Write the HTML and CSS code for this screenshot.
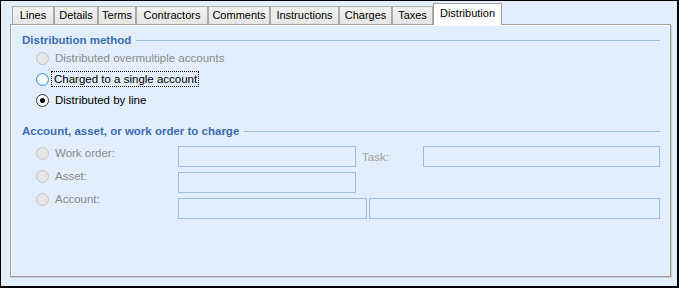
FILE: index.html
```html
<!DOCTYPE html>
<html>
<head>
<meta charset="utf-8">
<link rel="stylesheet" href="styles.css">
</head>
<body>
<div class="frame">
  <div class="tabs">
    <div class="tab w-lines">Lines</div>
    <div class="tab w-details">Details</div>
    <div class="tab w-terms">Terms</div>
    <div class="tab w-contr">Contractors</div>
    <div class="tab w-comm">Comments</div>
    <div class="tab w-instr">Instructions</div>
    <div class="tab w-charges">Charges</div>
    <div class="tab w-taxes">Taxes</div>
    <div class="tab active w-dist">Distribution</div>
  </div>
  <div class="panel">
    <div class="group-head first"><span class="group-title">Distribution method</span><span class="rule"></span></div>
    <div class="radios">
      <div class="radio-row disabled"><span class="radio off-disabled"></span><span class="lbl">Distributed overmultiple accounts</span></div>
      <div class="radio-row"><span class="radio hover"></span><span class="lbl focus">Charged to a single account</span></div>
      <div class="radio-row"><span class="radio checked"></span><span class="lbl">Distributed by line</span></div>
    </div>
    <div class="group-head second"><span class="group-title">Account, asset, or work order to charge</span><span class="rule"></span></div>
    <div class="charge">
      <div class="charge-labels">
        <div class="radio-row disabled"><span class="radio off-disabled"></span><span class="lbl">Work order:</span></div>
        <div class="radio-row disabled"><span class="radio off-disabled"></span><span class="lbl">Asset:</span></div>
        <div class="radio-row disabled"><span class="radio off-disabled"></span><span class="lbl">Account:</span></div>
      </div>
      <div class="charge-fields">
        <div class="field-row">
          <div class="box b-wo"></div>
          <span class="task">Task:</span>
          <div class="box b-task"></div>
        </div>
        <div class="field-row">
          <div class="box b-wo"></div>
        </div>
        <div class="field-row">
          <div class="box b-acc1"></div>
          <div class="box b-acc2"></div>
        </div>
      </div>
    </div>
  </div>
</div>
</body>
</html>
```

FILE: styles.css
```css
* { box-sizing: border-box; }
html, body { margin: 0; padding: 0; }
body {
  width: 679px;
  height: 288px;
  font-family: "Liberation Sans", Arial, sans-serif;
  font-size: 11px;
  color: #000;
  background: #e2eefd;
  overflow: hidden;
}
.frame {
  width: 679px;
  height: 288px;
  border-top: 1px solid #000;
  border-left: 1px solid #000;
  border-right: 2px solid #000;
  border-bottom: 2px solid #000;
  padding: 3px 0 0 9px;
  background: #e2eefd;
}
.tabs {
  display: flex;
  align-items: flex-end;
  height: 21px;
  margin-left: 2px;
  margin-bottom: -1px;
  position: relative;
  z-index: 1;
}
.tab {
  height: 18px;
  margin-bottom: 1px;
  border: 1px solid #a9a9a9;
  border-bottom: none;
  background: linear-gradient(#f2f2f2, #e6e6e6);
  text-align: center;
  line-height: 17px;
  white-space: nowrap;
  color: #000;
}
.tab.active {
  height: 22px;
  margin-bottom: 0;
  background: #fff;
  line-height: 19px;
  border-color: #a0a0a0;
}
.w-lines { width: 42px; }
.w-details { width: 44px; }
.w-terms { width: 38px; }
.w-contr { width: 72px; }
.w-comm { width: 62px; }
.w-instr { width: 69px; }
.w-charges { width: 53px; }
.w-taxes { width: 41px; }
.w-dist { width: 69px; }

.panel {
  width: 661px;
  height: 253px;
  border: 1px solid #a0a0a0;
  border-right-color: #9a9a9a;
  border-bottom-color: #9a9a9a;
  box-shadow: inset 1px 1px 0 #ffffff, 1px 1px 0 #cfcfcf;
  background: #e2eefd;
  padding: 8px 9px 0 11px;
}
.group-head {
  display: flex;
  align-items: center;
  height: 14px;
  margin-right: 1px;
}
.group-head.second { margin-top: 17px; }
.group-title {
  font-weight: bold;
  font-size: 11.5px;
  color: #3d6db4;
  white-space: nowrap;
  margin-right: 5px;
}
.rule {
  flex: 1;
  height: 1px;
  background: #9dbde2;
}
.radios {
  display: flex;
  flex-direction: column;
  gap: 7px;
  padding-left: 14px;
  margin-top: 4px;
}
.radio-row {
  display: flex;
  align-items: center;
  height: 14px;
  white-space: nowrap;
}
.radio {
  width: 13px;
  height: 13px;
  border-radius: 50%;
  flex: none;
  margin-right: 6px;
  position: relative;
}
.radio.off-disabled {
  background: #e6e6e6;
  border: 1px solid #c6c6c6;
}
.radio.hover {
  background: #fbfdff;
  border: 1px solid #3d8fe6;
  box-shadow: inset 0 0 0 1px #d8e9fb;
}
.radio.checked {
  background: #fff;
  border: 1px solid #333;
}
.radio.checked::after {
  content: "";
  position: absolute;
  left: 3px;
  top: 3px;
  width: 5px;
  height: 5px;
  border-radius: 50%;
  background: #000;
}
.lbl { font-size: 11.5px; }
.disabled .lbl { color: #8a8a8a; }
.lbl.focus {
  outline: 1px dotted #000;
  outline-offset: 0;
  padding: 1px 1px 1px 2px;
  margin-left: -3px;
}

.charge {
  display: flex;
  margin-top: 8px;
}
.charge-labels {
  width: 156px;
  flex: none;
  padding-left: 14px;
  display: flex;
  flex-direction: column;
  gap: 9px;
}
.charge-fields {
  flex: 1;
  display: flex;
  flex-direction: column;
  gap: 5px;
}
.field-row {
  display: flex;
  align-items: center;
  height: 21px;
}
.box {
  flex: none;
  height: 21px;
  border: 1px solid #9dbde6;
  background: #e2eefd;
}
.b-wo { width: 178px; }
.b-task { width: 237px; }
.b-acc1 { width: 189px; margin-right: 2px; }
.b-acc2 { width: 291px; }
.task {
  flex: none;
  color: #a3a3a3;
  font-size: 11.5px;
  width: 67px;
  padding-left: 6px;
}
```
